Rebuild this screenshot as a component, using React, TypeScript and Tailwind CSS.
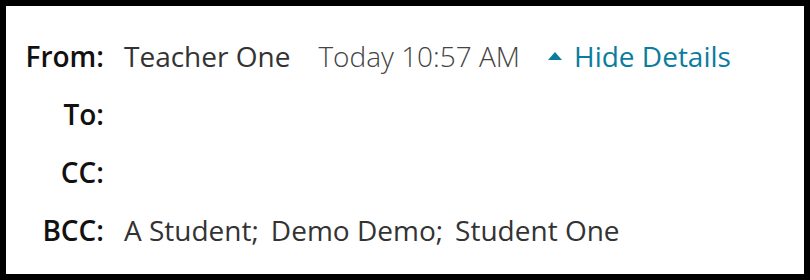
export default function App() {
  const recipients = ['A Student;', 'Demo Demo;', 'Student One'];
  const rows: { label: string; value?: React.ReactNode }[] = [
    {
      label: 'From:',
      value: (
        <div className="flex items-center">
          <span className="text-[#333333]">Teacher One</span>
          <span className="ml-[28px] font-light text-[#444444]">Today 10:57 AM</span>
          <a className="ml-[28px] flex items-center text-[#0a7d9e]" href="#">
            <svg width="14" height="9" viewBox="0 0 14 9" className="mr-[12px]">
              <path d="M7 0 L14 8 L0 8 Z" fill="#0a7d9e" />
            </svg>
            Hide Details
          </a>
        </div>
      ),
    },
    { label: 'To:' },
    { label: 'CC:' },
    {
      label: 'BCC:',
      value: (
        <div className="flex gap-[12px] text-[#333333]">
          {recipients.map((n) => (
            <span key={n}>{n}</span>
          ))}
        </div>
      ),
    },
  ];

  return (
    <div className="w-[810px] h-[280px] border-[6px] border-black bg-white font-['Open_Sans',sans-serif] text-[28px]">
      <div className="pt-[21px]">
        {rows.map((r) => (
          <div key={r.label} className="flex h-[58px] items-center">
            <div className="w-[98px] text-right font-semibold text-[#111111]">{r.label}</div>
            <div className="ml-[20px]">{r.value}</div>
          </div>
        ))}
      </div>
    </div>
  );
}
